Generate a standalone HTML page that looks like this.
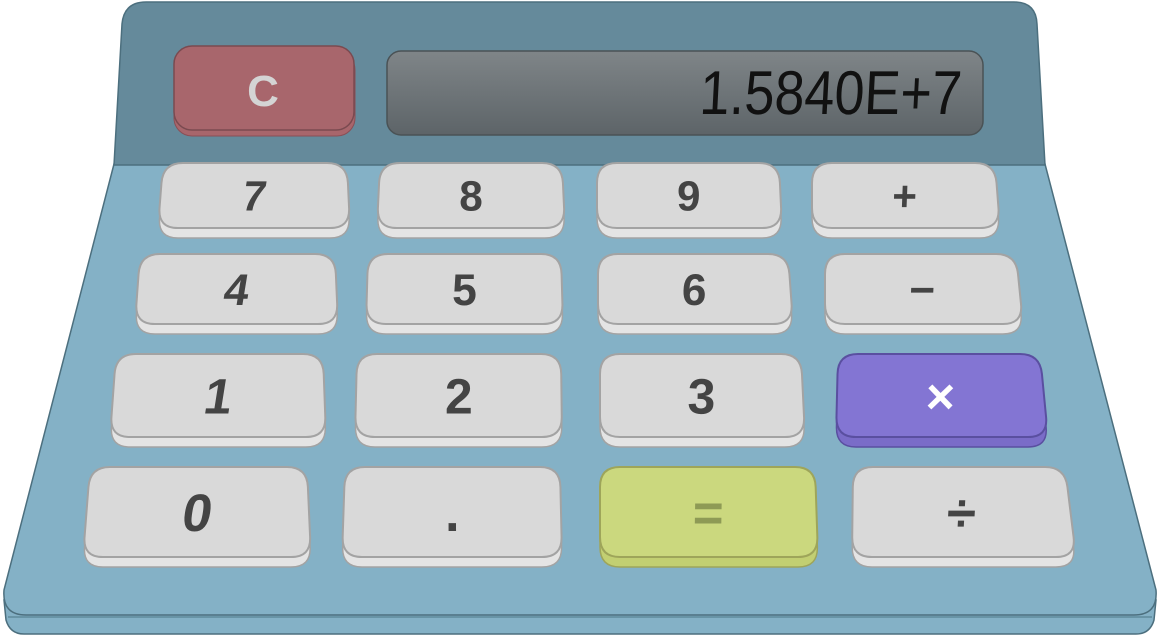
<!DOCTYPE html>
<html><head><meta charset="utf-8"><style>
html,body{margin:0;padding:0;background:#fff;width:1160px;height:636px;overflow:hidden}
svg{display:block}
</style></head><body>
<svg id="s" width="1160" height="636" viewBox="0 0 1160 636" xmlns="http://www.w3.org/2000/svg">
<defs>
<linearGradient id="lcd" x1="0" y1="0" x2="0" y2="1"><stop offset="0" stop-color="#7f8588"/><stop offset="1" stop-color="#5d6468"/></linearGradient>
</defs>
<path d="M4 600 L1156 600 L1154 620 Q1150 634 1136 634 L24 634 Q10 634 6 620 Z" fill="#84b1c6" stroke="#4c6f7e" stroke-width="1.5"/>
<line x1="8" y1="617" x2="1152" y2="617" stroke="#5f8a9c" stroke-width="1.5"/>
<path d="M114 164 L1045 164 L1156 590 Q1158 615 1134 615 L26 615 Q2 615 4 590 Z" fill="#84b1c6" stroke="#4c6f7e" stroke-width="1.5"/>
<path d="M122 24 Q124 2 146 2 L1014 2 Q1036 2 1037 24 L1045 165 L114 165 Z" fill="#658a9b" stroke="#4c6f7e" stroke-width="1.5"/>
<rect x="174" y="52" width="181" height="84" rx="18" fill="#a8666c" stroke="#8a4f56"/>
<rect x="174" y="46" width="180" height="84" rx="18" fill="#a8666c" stroke="#7a4a50" stroke-width="1.5"/>
<text x="263" y="106" font-family="Liberation Sans, sans-serif" font-weight="bold" font-size="44" fill="#d4d4d4" text-anchor="middle">C</text>
<rect x="387" y="51" width="596" height="84" rx="14" fill="url(#lcd)" stroke="#4a5255" stroke-width="1.5"/>
<text x="700" y="114" textLength="262" lengthAdjust="spacingAndGlyphs" font-family="Liberation Sans, sans-serif" font-size="62" fill="#111" transform="skewX(-3)" transform-origin="830 90">1.5840E+7</text>
<g id="keys"></g>
</svg>
<script>
var keys=[
[163,228,163,347,158,350,'7',1,'k'],[163,228,380,562,377,565,'8',0,'k'],[163,228,597,779,597,782,'9',0,'k'],[163,228,812,995,812,1000,'+',0,'k'],
[254,324,140,335,135,338,'4',1,'k'],[254,324,368,561,366,563,'5',0,'k'],[254,324,598,788,598,793,'6',0,'k'],[254,324,825,1016,825,1023,'\u2212',0,'k'],
[354,437,116,323,110,326,'1',1,'k'],[354,437,357,561,355,562,'2',0,'k'],[354,437,600,801,600,805,'3',0,'k'],[354,437,838,1040,836,1048,'\u00d7',0,'m'],
[467,557,90,307,83,311,'0',1,'k'],[467,557,345,560,342,562,'.',0,'k'],[467,557,600,815,600,818,'=',0,'e'],[467,557,853,1065,852,1076,'\u00f7',0,'k']];
var col={k:['#d9d9d9','#a3a3a3','#e4e4e4','#444'],m:['#8375d3','#5a4fa0','#7a6cc8','#fff'],e:['#cbd87e','#9ea55a','#c2cf72','#8e9a55']};
function P(y1,y2,a,b,c,d){var r=20;
 function lerp(p,q,t){return [p[0]+(q[0]-p[0])*t,p[1]+(q[1]-p[1])*t];}
 var pts=[[a,y1],[b,y1],[d,y2],[c,y2]],s='';
 for(var i=0;i<4;i++){var p=pts[i],prev=pts[(i+3)%4],next=pts[(i+1)%4];
  var l1=Math.hypot(p[0]-prev[0],p[1]-prev[1]),l2=Math.hypot(next[0]-p[0],next[1]-p[1]);
  var A=lerp(p,prev,r/l1),B=lerp(p,next,r/l2);
  s+=(i==0?'M':'L')+A[0]+' '+A[1]+' Q'+p[0]+' '+p[1]+' '+B[0]+' '+B[1]+' ';}
 return s+'Z';}
var h='';
keys.forEach(function(k){var y1=k[0],y2=k[1],c=col[k[8]];
 var th=10;
 h+='<path d="'+P(y1+th,y2+th,k[2],k[3],k[4],k[5])+'" fill="'+c[2]+'" stroke="'+c[1]+'" stroke-width="1.5"/>';
 h+='<path d="'+P(y1,y2,k[2],k[3],k[4],k[5])+'" fill="'+c[0]+'" stroke="'+c[1]+'" stroke-width="2"/>';
 var cx=(k[2]+k[3]+k[4]+k[5])/4,cy=(y1+y2)/2,fs=(y2-y1)*0.42+15;
 var sk=((k[4]-k[2])+(k[5]-k[3]))/2;var ang=Math.atan2(-sk,(y2-y1))*180/Math.PI;
 if(k[7])ang-=10;
 h+='<text x="'+cx+'" y="'+(cy+fs*0.36)+'" font-family="Liberation Sans, sans-serif" font-weight="bold" font-size="'+fs+'" fill="'+c[3]+'" text-anchor="middle" transform="skewX('+ang.toFixed(1)+')" transform-origin="'+cx+' '+cy+'">'+k[6]+'</text>';
});
document.getElementById('keys').innerHTML=h;
</script>
</body></html>
